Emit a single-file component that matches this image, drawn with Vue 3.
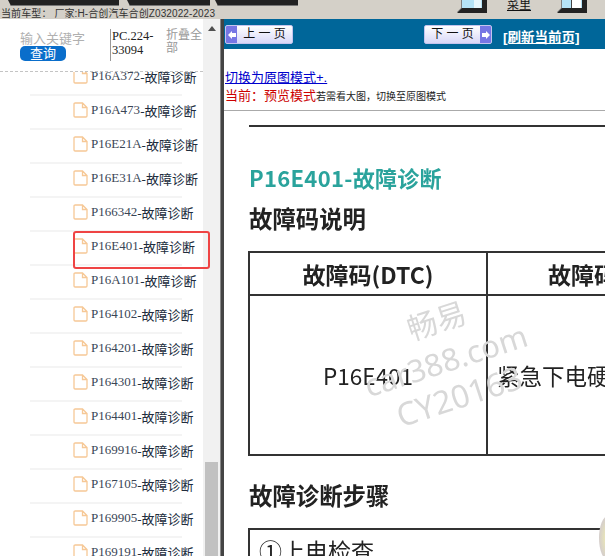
<script setup>
const codes = ['P16A372','P16A473','P16E21A','P16E31A','P166342','P16E401','P16A101','P164102','P164201','P164301','P164401','P169916','P167105','P169905','P169191']
const selected = 'P16E401'
</script>

<template>
  <div class="page">
    <header class="top">
      <div class="top-left">
        <div class="bars">
          <span class="bar b1"></span>
          <span class="bar b2"></span>
          <span class="bar b3"></span>
        </div>
        <div class="model">当前车型： 厂家:H-合创汽车合创Z032022-2023</div>
      </div>
      <div class="top-right">
        <svg class="win" viewBox="0 0 30 13" width="30" height="13">
          <path d="M0 12L4 8V0H26V8H30V12Z" fill="#808080"/>
          <path d="M0 13L5 8H25V0H30V13Z" fill="#222"/>
          <rect x="5" y="0" width="20" height="8" fill="#b5e3f7"/>
          <rect x="17" y="0" width="7" height="8" fill="#e8f7fd"/>
        </svg>
        <span class="menu-label">菜里</span>
        <svg class="win" viewBox="0 0 30 13" width="30" height="13">
          <path d="M0 12L4 8V0H26V8H30V12Z" fill="#808080"/>
          <path d="M0 13L5 8H25V0H30V13Z" fill="#222"/>
          <rect x="5" y="0" width="20" height="8" fill="#b5e3f7"/>
          <rect x="15" y="0" width="9" height="8" fill="#fff"/>
          <rect x="14" y="0" width="1" height="8" fill="#444"/>
        </svg>
      </div>
    </header>

    <main class="main">
      <aside class="side">
        <div class="tree">
          <div class="search">
            <div class="search-col">
              <span class="placeholder">输入关键字</span>
              <button class="query">查询</button>
            </div>
            <div class="pc">PC.224-33094</div>
            <div class="fold">折叠全部</div>
          </div>
          <ul class="list">
            <li v-for="c in codes" :key="c" class="row">
              <svg class="file" viewBox="0 0 15 16" width="15" height="16">
                <path d="M1 2.2Q1 1 2.2 1H9.5L14 5.5V13.8Q14 15 12.8 15H2.2Q1 15 1 13.8Z M9.5 1V5.5H14" fill="#fff" stroke="#f6c896" stroke-width="1.3"/>
              </svg>
              <span class="code">{{ c }}</span><span class="diag">-故障诊断</span>
              <span v-if="c === selected" class="mark"></span>
            </li>
          </ul>
        </div>
        <div class="scroll">
          <span class="up"></span>
          <span class="thumb"></span>
        </div>
      </aside>
      <div class="split"></div>
      <section class="content">
        <nav class="nav">
          <button class="page-btn prev">
            <span class="cap"><svg viewBox="0 0 8 8" width="8" height="8"><path d="M0 4L4 0V2H8V6H4V8Z" fill="#fff"/></svg></span>
            <span class="lbl">上 一 页</span>
          </button>
          <button class="page-btn next">
            <span class="lbl">下 一 页</span>
            <span class="cap"><svg viewBox="0 0 8 8" width="8" height="8"><path d="M8 4L4 0V2H0V6H4V8Z" fill="#fff"/></svg></span>
          </button>
          <a class="refresh">[刷新当前页]</a>
        </nav>
        <div class="mode">
          <a class="switch">切换为原图模式+.</a>
          <div class="now"><span class="red">当前：预览模式</span><span class="hint">若需看大图，切换至原图模式</span></div>
        </div>
        <article class="doc">
          <div class="rule"></div>
          <h1 class="title">P16E401-故障诊断</h1>
          <h2 class="h">故障码说明</h2>
          <div class="table">
            <div class="cell head">故障码(DTC)</div>
            <div class="cell head second">故障码说明</div>
            <div class="cell body">P16E401</div>
            <div class="cell body second">紧急下电硬线故障</div>
          </div>
          <h2 class="h steps">故障诊断步骤</h2>
          <div class="step">①上电检查</div>
          <div class="wm w1">畅易</div>
          <div class="wm w2">car388.com</div>
          <div class="wm w3">CY20163</div>
          <div class="glow"></div>
        </article>
      </section>
    </main>
  </div>
</template>

<style scoped>
.page {
  width: 605px;
  height: 556px;
  display: flex;
  flex-direction: column;
  overflow: hidden;
  background: #fff;
  font-family: "Liberation Sans", "Noto Sans CJK SC", sans-serif;
}
.top {
  height: 19px;
  flex: none;
  background: #d4d0c8;
  display: flex;
  overflow: hidden;
}
.top-left { width: 457px; flex: none; }
.bars { display: flex; height: 9px; padding-left: 8px; }
.bar {
  display: block;
  height: 5px;
  background: #222;
  border-bottom: 1px solid #777;
  box-sizing: content-box;
  clip-path: polygon(0 0, 100% 0, 100% 100%, 3px 100%);
}
.b1 { width: 111px; margin-right: 8px; }
.b2 { width: 83px; margin-right: 5px; }
.b3 { width: 83px; }
.model {
  font-size: 10px;
  line-height: 10px;
  color: #333;
  padding-left: 1px;
  white-space: nowrap;
  letter-spacing: 0.1px;
}
.top-right { display: flex; align-items: flex-start; }
.win { display: block; flex: none; }
.menu-label {
  width: 70px;
  padding-right: 6px;
  text-align: center;
  font-size: 12px;
  line-height: 12px;
  height: 12px;
  color: #111;
  text-decoration: underline;
  margin-top: -1px;
  box-sizing: border-box;
}

.main { flex: 1; display: flex; min-height: 0; }
.side { width: 220px; flex: none; display: flex; position: relative; }
.tree { width: 203px; flex: none; display: flex; flex-direction: column; }
.search {
  height: 52px;
  flex: none;
  display: flex;
  border-bottom: 1px dashed #c4c4c4;
  box-sizing: content-box;
  overflow: hidden;
  position: relative;
  z-index: 1;
  background: #fff;
}
.search-col {
  width: 110px;
  flex: none;
  padding: 13px 0 0 20px;
  box-sizing: border-box;
  display: flex;
  flex-direction: column;
  align-items: flex-start;
}
.placeholder { font-size: 13px; line-height: 14px; color: #b0b0b0; white-space: nowrap; }
.query {
  width: 46px;
  height: 15px;
  margin: 0;
  padding: 0;
  border: 0;
  border-radius: 5px;
  background: #0a6ecb;
  color: #fff;
  font: 13px/15px "Liberation Sans", "Noto Sans CJK SC", sans-serif;
}
.pc {
  width: 56px;
  flex: none;
  height: 32px;
  margin-top: 10px;
  padding-left: 1px;
  box-sizing: border-box;
  border-left: 1px solid #999;
  font: 12.5px/14px "Liberation Serif", serif;
  color: #222;
  word-break: break-word;
}
.fold {
  width: 36px;
  margin-top: 10px;
  font-size: 12px;
  line-height: 13px;
  color: #999;
}
.list {
  list-style: none;
  margin: -10px 0 0;
  padding: 0;
  flex: 1;
}
.row {
  margin-left: 30px;
  width: 152px;
  height: 34px;
  box-sizing: border-box;
  border-bottom: 2px solid #f4f4f4;
  padding: 0 0 4px 43px;
  display: flex;
  align-items: center;
  white-space: nowrap;
  position: relative;
  font-size: 13px;
}
.file { flex: none; margin-right: 3px; }
.code { font-family: "Liberation Serif", serif; color: #3a4656; }
.diag { font-family: "Liberation Serif", "Noto Sans CJK SC", serif; color: #202c3c; }
.mark {
  position: absolute;
  left: 43px;
  top: -1px;
  width: 137px;
  height: 38px;
  box-sizing: border-box;
  border: 2px solid #ef4444;
  border-radius: 3px;
  z-index: 3;
}
.scroll {
  width: 17px;
  flex: none;
  background: #f1f1f1;
  display: flex;
  flex-direction: column;
  justify-content: space-between;
  align-items: flex-end;
  height: 537px;
  box-sizing: border-box;
  padding-right: 2px;
  overflow: hidden;
}
.up {
  width: 0;
  height: 0;
  border-left: 4px solid transparent;
  border-right: 4px solid transparent;
  border-bottom: 5px solid #505050;
  margin: 7px 2px 0 0;
}
.thumb { width: 13px; height: 94px; background: #c1c1c1; }
.split { width: 4px; flex: none; background: #444; border-left: 1px solid #888; box-sizing: border-box; }

.content { flex: 1; min-width: 0; display: flex; flex-direction: column; overflow: hidden; }
.nav {
  height: 30px;
  flex: none;
  background: #006699;
  display: flex;
  align-items: flex-start;
  padding-top: 6px;
  box-sizing: border-box;
}
.page-btn {
  width: 68px;
  height: 19px;
  margin: 0;
  padding: 0;
  border: 1px solid #c4c4ee;
  border-radius: 2px;
  background: linear-gradient(#fff, #d8d8f8);
  display: flex;
  align-items: stretch;
  font: 12px/16px "Liberation Sans", "Noto Sans CJK SC", sans-serif;
  color: #111;
  overflow: hidden;
}
.prev { margin-left: 1px; }
.next { margin-left: 131px; }
.cap {
  width: 11px;
  flex: none;
  background: #7676e4;
  display: flex;
  align-items: center;
  justify-content: center;
}
.lbl { flex: 1; text-align: center; }
.refresh {
  margin: 5px 0 0 11px;
  color: #fff;
  font-size: 13.5px;
  font-weight: 700;
  line-height: 15px;
  text-decoration: underline;
  white-space: nowrap;
}
.mode {
  height: 62px;
  flex: none;
  padding: 20px 0 0 1px;
  box-sizing: border-box;
  border-bottom: 1px solid #aaa;
}
.switch { color: #00c; font-size: 13px; line-height: 17px; text-decoration: underline; display: block; }
.now { line-height: 17px; white-space: nowrap; }
.red { color: #c00; font-size: 13px; }
.hint { color: #222; font-size: 10px; }
.doc {
  flex: 1;
  position: relative;
  padding: 14px 0 0 25px;
  overflow: hidden;
  font-family: "Noto Sans CJK SC", "Noto Sans", sans-serif;
  color: #222;
  filter: blur(0.35px);
}
.rule { height: 2px; background: #333; }
.title {
  margin: 32px 0 0;
  font-size: 22px;
  line-height: 36px;
  font-weight: 700;
  letter-spacing: 0.3px;
  color: #2aa39c;
  white-space: nowrap;
}
.h {
  margin: 6px 0 0;
  font-size: 23.4px;
  line-height: 34px;
  font-weight: 700;
  color: #222;
  white-space: nowrap;
}
.table {
  margin: 16px 0 0 -1px;
  width: 520px;
  display: grid;
  grid-template-columns: 236px 284px;
  grid-template-rows: 43px 158px;
  border: 2px solid #333;
  box-sizing: content-box;
}
.cell { display: flex; align-items: center; justify-content: center; white-space: nowrap; }
.head { font-size: 23px; font-weight: 700; border-bottom: 2px solid #333; }
.body { font-size: 22.5px; }
.second { border-left: 2px solid #333; justify-content: flex-start; }
.head.second { padding-left: 60px; }
.body.second { padding-left: 9px; }
.steps { margin-top: 22px; }
.step {
  margin: 16px 0 0 -1px;
  width: 520px;
  height: 60px;
  border: 2px solid #333;
  box-sizing: content-box;
  padding-left: 9px;
  font-size: 23px;
  line-height: 40px;
  white-space: nowrap;
}
.wm {
  position: absolute;
  color: #d8d8d8;
  white-space: nowrap;
  transform: rotate(-18deg);
  transform-origin: center;
  font-family: "Noto Sans", "Noto Sans CJK SC", sans-serif;
}
.w1 { left: 182px; top: 186px; font-size: 30px; }
.w2 { left: 137px; top: 228px; font-size: 31px; }
.w3 { left: 170px; top: 263px; font-size: 32px; }
.glow {
  position: absolute;
  right: -12px;
  bottom: -4px;
  width: 18px;
  height: 44px;
  border-radius: 50%;
  background: radial-gradient(#f1efb0, #c9c0d8);
}
</style>

<style>
html, body { margin: 0; overflow: hidden; }
</style>
